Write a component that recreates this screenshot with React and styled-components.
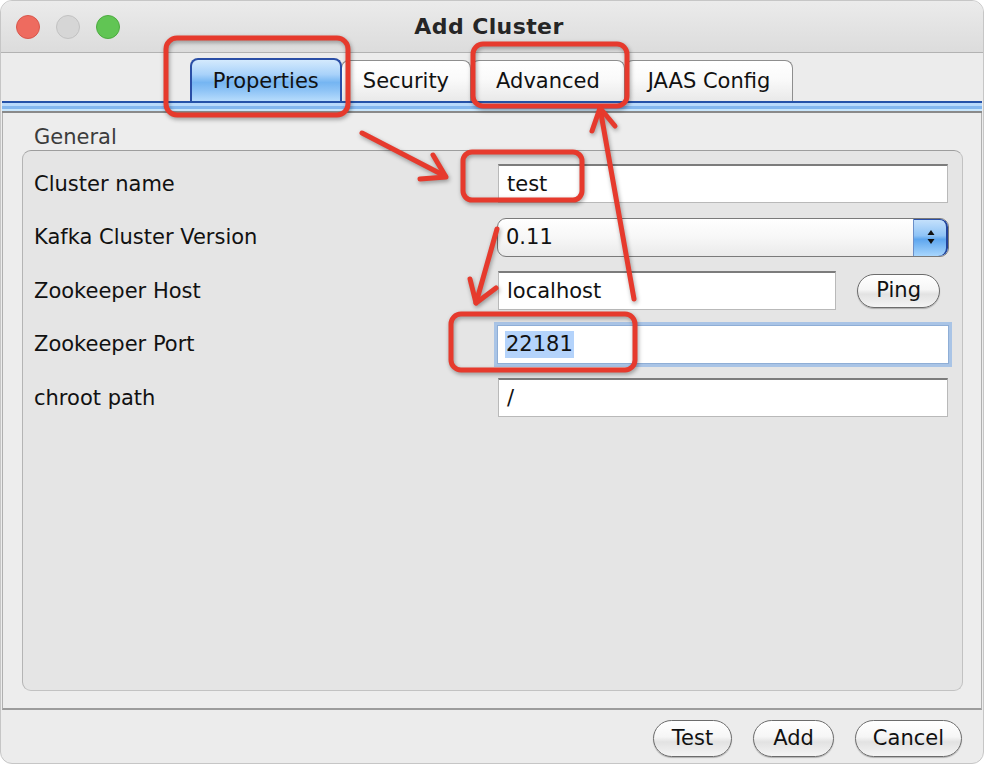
import React from 'react';
import styled, { createGlobalStyle, css } from 'styled-components';

const GlobalStyle = createGlobalStyle`
  html, body {
    margin: 0;
    padding: 0;
    background: #ffffff;
  }
  body {
    font-family: "DejaVu Sans", "Liberation Sans", sans-serif;
  }
`;

const Window = styled.div`
  position: relative;
  width: 984px;
  height: 764px;
  box-sizing: border-box;
  border: 1px solid #c6c6c6;
  border-radius: 12px;
  overflow: hidden;
  background: #ececec;
  display: flex;
  flex-direction: column;
  color: #111;
  font-size: 21px;
`;

const TitleBar = styled.div`
  flex: none;
  height: 51px;
  display: grid;
  grid-template-columns: 1fr auto 1fr;
  align-items: center;
  background: linear-gradient(#ebebeb, #dcdcdc);
  border-bottom: 1px solid #b2b2b2;
`;

const Lights = styled.div`
  display: flex;
  gap: 16px;
  padding-left: 15px;
`;

const Light = styled.span`
  width: 24px;
  height: 24px;
  box-sizing: border-box;
  border-radius: 50%;
  background: ${({ color }) => color};
  border: 1px solid ${({ edge }) => edge};
`;

const Title = styled.div`
  font-weight: bold;
  font-size: 22px;
  color: #262626;
  letter-spacing: 0.4px;
  margin-left: -6px;
`;

const TabRow = styled.div`
  flex: none;
  height: 48px;
  display: flex;
  justify-content: center;
  align-items: flex-end;
`;

const Tab = styled.div`
  height: 41px;
  box-sizing: border-box;
  padding: 0 ${({ pad }) => pad}px;
  display: flex;
  align-items: center;
  border: 1px solid #8e8e8e;
  border-bottom: none;
  border-radius: 8px 8px 0 0;
  background: linear-gradient(#ffffff 0%, #fafafa 45%, #e9e9e9 100%);
  color: #111;

  ${({ active }) =>
    active &&
    css`
      height: 43px;
      border: 2px solid #2a4ea6;
      border-bottom: none;
      background: linear-gradient(
        #d4eafd 0%,
        #a9d2fa 35%,
        #75b5f2 55%,
        #8fc4f6 75%,
        #b7dcfc 100%
      );
      margin: 0 -1px;
      position: relative;
    `}
`;

const TabStrip = styled.div`
  flex: none;
  height: 12px;
  margin: 0 1px;
  background: linear-gradient(
    #2552a8 0px,
    #2552a8 2px,
    #b9dafb 2px,
    #b9dafb 5px,
    #84b7ee 5px,
    #84b7ee 8px,
    #c9e6fb 8px,
    #c9e6fb 10px,
    #8a8a8a 10px,
    #8a8a8a 12px
  );
`;

const Panel = styled.div`
  flex: 1;
  display: flex;
  flex-direction: column;
  margin: 0 1px;
  padding: 11px 18px 17px 19px;
  border-left: 1px solid #b0b0b0;
  border-right: 1px solid #b0b0b0;
  border-bottom: 2px solid #9c9c9c;
  background: #ededed;
`;

const GroupTitle = styled.div`
  height: 26px;
  line-height: 26px;
  padding-left: 12px;
  color: #3c3c3c;
`;

const GroupBox = styled.div`
  flex: 1;
  display: grid;
  grid-template-columns: 464px 1fr;
  grid-auto-rows: 39px;
  row-gap: 14.5px;
  align-content: start;
  align-items: center;
  padding: 13px 14px 0 11px;
  border: 1px solid #c2c2c2;
  border-top-color: #9d9d9d;
  border-left-color: #b4b4b4;
  border-radius: 9px;
  background: #e5e5e5;
`;

const Label = styled.div`
  color: #111;
`;

const fieldBase = css`
  box-sizing: border-box;
  height: 39px;
  display: flex;
  align-items: center;
  padding-left: 8px;
  background: #fff;
  border: 1px solid #b9b9b9;
  border-top: 2px solid #7c7c7c;
  color: #111;
`;

const TextField = styled.div`
  ${fieldBase}
  ${({ focused }) =>
    focused &&
    css`
      border: 1px solid #8faed6;
      box-shadow: 0 0 0 3px #a9c4e6;
      margin: 0 -1px;
    `}
`;

const Selected = styled.span`
  background: #b4d3fb;
  padding: 1px 1px 2px;
  margin-left: -1px;
`;

const Combo = styled.div`
  box-sizing: border-box;
  height: 39px;
  display: flex;
  align-items: stretch;
  margin: 0 -1px;
  border: 1px solid #7a7a7a;
  border-radius: 9px;
  overflow: hidden;
  background: linear-gradient(#ffffff 0%, #f7f7f7 50%, #eaeaea 100%);
`;

const ComboValue = styled.div`
  flex: 1;
  display: flex;
  align-items: center;
  padding-left: 8px;
`;

const ComboArrow = styled.div`
  width: 34px;
  display: flex;
  align-items: center;
  justify-content: center;
  border-left: 1px solid #6b8fc8;
  background: linear-gradient(#c7e2fc 0%, #8ec3f6 45%, #5ea6ee 55%, #a8d6fd 100%);
  border-radius: 0 8px 8px 0;
  box-shadow: inset -2px 0 0 #22439a, inset 0 1px 0 #2a4ea6;
`;

const HostRow = styled.div`
  display: flex;
  align-items: center;
  gap: 21px;
  padding-right: 8px;
`;

const HostField = styled(TextField)`
  flex: 1;
`;

const PillButton = styled.button`
  box-sizing: border-box;
  height: ${({ small }) => (small ? 34 : 37)}px;
  padding: 0 ${({ pad }) => pad || 18}px;
  border: 1px solid #6c6c6c;
  border-radius: 19px;
  background: linear-gradient(#ffffff 0%, #f6f6f6 45%, #e2e2e2 60%, #f4f4f4 100%);
  box-shadow: 0 1px 1px rgba(0, 0, 0, 0.25);
  font-family: inherit;
  font-size: 21px;
  color: #111;
  line-height: 1;
`;

const Footer = styled.div`
  flex: none;
  height: 53px;
  box-sizing: border-box;
  padding: 3px 21px 0 0;
  display: flex;
  justify-content: flex-end;
  align-items: center;
  gap: 21px;
`;

const Overlay = styled.svg`
  position: absolute;
  left: -1px;
  top: -1px;
  width: 984px;
  height: 764px;
  pointer-events: none;
  filter: drop-shadow(1px 2px 2px rgba(0, 0, 0, 0.35));
`;

const RED = '#e63a2d';

const Arrows = () => (
  <Overlay viewBox="0 0 984 764">
    <g fill="none" stroke={RED} strokeWidth="5" strokeLinecap="round" strokeLinejoin="round">
      <rect x="166" y="38" width="182" height="77" rx="11" />
      <rect x="473" y="44" width="154" height="62" rx="10" />
      <rect x="463" y="152" width="119" height="48" rx="9" />
      <rect x="451" y="314" width="184" height="56" rx="10" />
      <path d="M362 133 L445 176" />
      <path d="M420 179 L446 177 L433 155" />
      <path d="M497 229 L476 303" />
      <path d="M470 279 L476 303 L496 288" />
      <path d="M634 299 L600 108" />
      <path d="M592 131 L600 108 L615 126" />
    </g>
  </Overlay>
);

const UpDown = () => (
  <svg width="10" height="18" viewBox="0 0 10 18">
    <path d="M5 2 L8.5 7 L1.5 7 Z" fill="#111" />
    <path d="M5 16 L8.5 11 L1.5 11 Z" fill="#111" />
  </svg>
);

const tabs = [
  { name: 'Properties', pad: 21, active: true },
  { name: 'Security', pad: 21 },
  { name: 'Advanced', pad: 24 },
  { name: 'JAAS Config', pad: 22 },
];

export default function App() {
  return (
    <>
      <GlobalStyle />
      <Window>
        <TitleBar>
          <Lights>
            <Light color="#ee6b5f" edge="#d8574c" />
            <Light color="#d6d6d6" edge="#c2c2c2" />
            <Light color="#61c554" edge="#4dab40" />
          </Lights>
          <Title>Add Cluster</Title>
          <div />
        </TitleBar>

        <TabRow>
          {tabs.map(t => (
            <Tab key={t.name} active={t.active} pad={t.pad}>
              {t.name}
            </Tab>
          ))}
        </TabRow>
        <TabStrip />

        <Panel>
          <GroupTitle>General</GroupTitle>
          <GroupBox>
            <Label>Cluster name</Label>
            <TextField>test</TextField>

            <Label>Kafka Cluster Version</Label>
            <Combo>
              <ComboValue>0.11</ComboValue>
              <ComboArrow>
                <UpDown />
              </ComboArrow>
            </Combo>

            <Label>Zookeeper Host</Label>
            <HostRow>
              <HostField>localhost</HostField>
              <PillButton small>Ping</PillButton>
            </HostRow>

            <Label>Zookeeper Port</Label>
            <TextField focused>
              <Selected>22181</Selected>
            </TextField>

            <Label>chroot path</Label>
            <TextField>/</TextField>
          </GroupBox>
        </Panel>

        <Footer>
          <PillButton>Test</PillButton>
          <PillButton pad={19}>Add</PillButton>
          <PillButton pad={17}>Cancel</PillButton>
        </Footer>

        <Arrows />
      </Window>
    </>
  );
}
